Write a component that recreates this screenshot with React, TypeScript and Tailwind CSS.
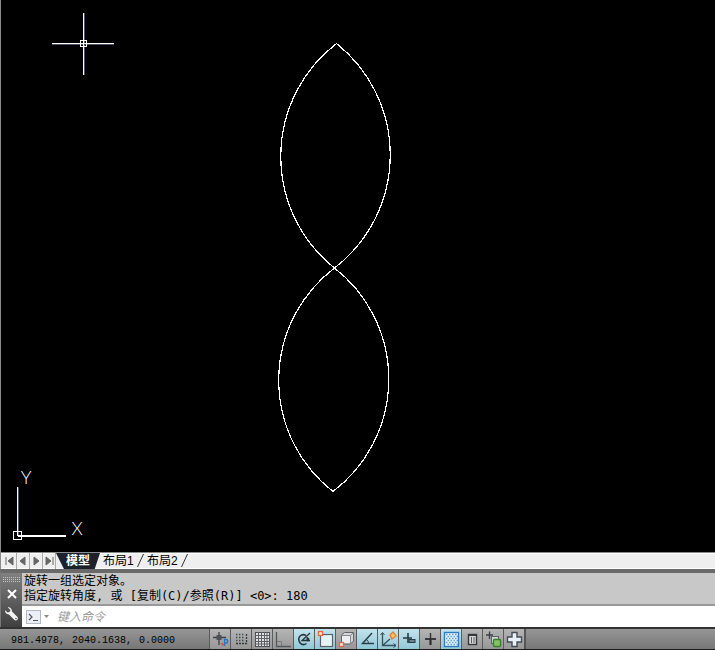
import { ReactNode, useState } from 'react';

const NAV_BUTTONS = [
  { label: 'First layout', path: 'M2 2V10M9 2V10L4 6Z' },
  { label: 'Previous layout', path: 'M8 2V10L3 6Z' },
  { label: 'Next layout', path: 'M4 2V10L9 6Z' },
  { label: 'Last layout', path: 'M10 2V10M3 2V10L8 6Z' },
];

const LAYOUTS = ['布局1', '布局2'];

const HISTORY = ['旋转一组选定对象。', '指定旋转角度, 或 [复制(C)/参照(R)] <0>: 180'];

type Tool = {
  id: string;
  label: string;
  icon: ReactNode;
};

const TOOLS: Tool[] = [
  {
    id: 'infer',
    label: '推断约束',
    icon: (
      <>
        <path d="M8 2V15M2 7.5H15" stroke="#3d4248" strokeWidth="1.3" />
        <rect x="5.5" y="5" width="5" height="5" fill="#4d5258" />
        <path d="M13.5 16V9.500H16Q17.500 11 16 13H13.500" stroke="#2778c0" strokeWidth="1.3" />
        <path d="M10.5 13L12.5 15.500" stroke="#d9502b" strokeWidth="1.6" />
      </>
    ),
  },
  {
    id: 'snap',
    label: '捕捉模式',
    icon: (
      <>
        <path d="M4 4.5H12M4 7.5H12M4 10.5H12" stroke="#44474b" strokeWidth="1.3" strokeDasharray="1.4 1.6" />
        <path d="M4 13.5H15M14.5 4V14" stroke="#33363a" strokeWidth="1.3" strokeDasharray="2 1" />
      </>
    ),
  },
  {
    id: 'grid',
    label: '栅格显示',
    icon: (
      <>
        <rect x="2.5" y="2.5" width="14" height="14" fill="#e4e4e4" stroke="#4a4d51" />
        <path
          d="M5.5 2V17M8.5 2V17M11.5 2V17M14 2V17M2 5.5H17M2 8.5H17M2 11.5H17M2 14H17"
          stroke="#5b5e62"
        />
      </>
    ),
  },
  {
    id: 'ortho',
    label: '正交模式',
    icon: (
      <>
        <path d="M2.5 2V16.5H17" stroke="#55595e" strokeWidth="1.3" />
        <path d="M3 11.5H7.5V16" stroke="#74787d" />
      </>
    ),
  },
  {
    id: 'polar',
    label: '极轴追踪',
    icon: (
      <>
        <path d="M11 5.500Q8 3.500 5 6Q2.500 9 5 13Q8 16 11.500 13.500" stroke="#27333b" strokeWidth="1.5" />
        <path d="M15 3L7 10.500H15" stroke="#27333b" strokeWidth="1.3" />
        <path d="M11.5 6.500L14.500 8.500L13 12L11.500 9.500Z" fill="#27333b" />
      </>
    ),
  },
  {
    id: 'osnap',
    label: '对象捕捉',
    icon: (
      <>
        <rect x="4.5" y="4.5" width="12" height="12" fill="#e5f3f7" stroke="#59636a" strokeWidth="1.2" />
        <rect x="2.5" y="1.5" width="4" height="4" fill="#ffe5d6" stroke="#e8683a" strokeWidth="1.3" />
      </>
    ),
  },
  {
    id: 'osnap3d',
    label: '三维对象捕捉',
    icon: (
      <>
        <path d="M4.5 5L7.5 2.5H16.5V11L13.5 14H4.5Z" fill="#d4d7da" stroke="#62676c" />
        <path d="M4.5 5.5H13.5V14M13.5 5.5L16.5 2.5" stroke="#858a8f" />
        <rect x="5" y="6" width="8" height="7" fill="#eceff1" />
        <rect x="2.5" y="12.5" width="4" height="4" fill="#ffe5d6" stroke="#e8683a" strokeWidth="1.3" />
      </>
    ),
  },
  {
    id: 'otrack',
    label: '对象捕捉追踪',
    icon: (
      <>
        <path d="M14 3L4.5 13.5H16" stroke="#2b4049" strokeWidth="1.5" />
        <path d="M8.5 9.5Q10.5 11 10.5 13.5" stroke="#2b4049" />
      </>
    ),
  },
  {
    id: 'ducs',
    label: '允许动态 UCS',
    icon: (
      <>
        <path d="M3.5 3V15.5H17M3.5 15.5L11 9" stroke="#35515c" strokeWidth="1.3" />
        <path d="M1.5 5L3.5 2.5L5.5 5M14.5 13.5L17 15.5L14.5 17.5" stroke="#35515c" />
        <path d="M11 5L14 2L17 6L13 9Z" fill="#ffc34d" stroke="#e8792e" strokeWidth="1.2" />
      </>
    ),
  },
  {
    id: 'dyn',
    label: '动态输入',
    icon: (
      <>
        <path d="M8 3V13M3 8H12" stroke="#273b44" strokeWidth="1.6" />
        <rect x="9" y="9.5" width="6" height="3" fill="#6f858e" stroke="#273b44" />
      </>
    ),
  },
  {
    id: 'lwt',
    label: '显示/隐藏线宽',
    icon: (
      <>
        <path d="M9.5 3V9" stroke="#2c2e31" strokeWidth="1.4" />
        <path d="M9.5 9V15" stroke="#2c2e31" strokeWidth="2.2" />
        <path d="M4 9H15" stroke="#2c2e31" strokeWidth="1.8" />
      </>
    ),
  },
  {
    id: 'tpy',
    label: '显示/隐藏透明度',
    icon: (
      <>
        <rect x="2.5" y="2.5" width="14" height="14" fill="#edf6fc" stroke="#2f7dc0" strokeWidth="1.4" />
        {[4, 6, 8, 10, 12, 14].map((y) => (
          <path
            key={y}
            d={y % 4 === 0 ? `M4 ${y + 0.5}H16` : `M5.5 ${y + 0.5}H16`}
            stroke="#5a9ed2"
            strokeWidth="1.5"
            strokeDasharray="1.5 1.5"
          />
        ))}
      </>
    ),
  },
  {
    id: 'qp',
    label: '快捷特性',
    icon: (
      <>
        <rect x="5.5" y="4.5" width="8" height="10" fill="#d8d8d8" stroke="#34373a" strokeWidth="1.4" />
        <path d="M6 5.5H13" stroke="#34373a" />
        <path d="M8.5 7V13M11 7V13" stroke="#5b5e61" />
      </>
    ),
  },
  {
    id: 'sc',
    label: '选择循环',
    icon: (
      <>
        <path d="M5.5 1.5V9M2 5H9" stroke="#3b4044" strokeWidth="1.3" />
        <rect x="7.5" y="6.5" width="7" height="7" fill="#cfd3d5" stroke="#5d6367" />
        <rect x="9.5" y="9.5" width="7" height="7" rx="1" fill="#86c163" stroke="#36812a" strokeWidth="1.4" />
      </>
    ),
  },
  {
    id: 'am',
    label: '注释监视器',
    icon: (
      <path
        d="M7 2.5H12V7H16.5V12H12V16.5H7V12H2.5V7H7Z"
        fill="#eaf0f5"
        stroke="#414c57"
        strokeWidth="1.4"
      />
    ),
  },
];

function DrawingArea() {
  return (
    <main className="relative min-h-[552px] flex-1 overflow-hidden border-l border-[#8a8a8a] bg-black">
      <svg className="absolute left-0 top-0" width="400" height="500" viewBox="1 0 400 500" fill="none" stroke="#fff">
        <g shapeRendering="crispEdges">
          <path d="M52 44.5H114M84.500 13V75" stroke="#46536b" />
          <path d="M52 43.5H114M83.500 13V75" />
          <rect x="80.5" y="40.5" width="6" height="6" />
        </g>
        <g strokeWidth="1.2" shapeRendering="crispEdges">
          <path d="M336.5 43.5A142.5 142.5 0 0 0 334.5 268A142.5 142.5 0 0 0 336.5 43.5Z" />
          <path d="M334.5 268A141 141 0 0 0 333 491.5A141 141 0 0 0 334.5 268Z" />
        </g>
      </svg>
      <svg className="absolute bottom-0 left-0" width="100" height="92" viewBox="1 460 100 92" fill="none">
        <g stroke="#fff" shapeRendering="crispEdges">
          <path d="M18.5 487V536" stroke="#46536b" />
          <path d="M17.5 487V536" />
          <path d="M18 536H66" strokeWidth="2" />
          <rect x="13.5" y="531.5" width="8" height="8" />
        </g>
        <g fill="#fff" fontSize="18" textAnchor="middle" className="font-['Lato',sans-serif] font-light">
          <text x="26" y="484">Y</text>
          <text x="77" y="535">X</text>
        </g>
      </svg>
    </main>
  );
}

function LayoutTabs() {
  const [active, setActive] = useState('模型');

  return (
    <nav className="flex h-[17px] items-stretch border-l border-t border-l-[#8a8a8a] border-t-[#8a8a8a] bg-[#efefef] pl-[3px] text-[12px] leading-4 shadow-[inset_0_1px_0_#fff,inset_0_-1px_0_#fff]">
      {NAV_BUTTONS.map((btn) => (
        <button
          key={btn.label}
          type="button"
          aria-label={btn.label}
          className="flex w-[13px] items-center justify-center border-r border-[#aaa]"
        >
          <svg width="12" height="12" viewBox="0 0 12 12" fill="#666" stroke="#666" strokeWidth="1">
            <path d={btn.path} />
          </svg>
        </button>
      ))}
      <button
        type="button"
        onClick={() => setActive('模型')}
        aria-pressed={active === '模型'}
        className="w-11 bg-[#1c222b] text-center font-bold text-white [clip-path:polygon(0_0,100%_0,88%_100%,18%_100%)]"
      >
        模型
      </button>
      {LAYOUTS.map((name) => (
        <button
          key={name}
          type="button"
          onClick={() => setActive(name)}
          aria-pressed={active === name}
          className="flex w-11 justify-between pl-[3px] text-black"
        >
          <span>{name}</span>
          <svg width="8" height="16" viewBox="0 0 8 16" fill="none" stroke="#333">
            <path d="M7.5 1L1.5 14" />
          </svg>
        </button>
      ))}
    </nav>
  );
}

function CommandLine() {
  const [command, setCommand] = useState('');

  return (
    <section className="flex border-l border-t-4 border-l-[#777] border-t-[#6a6a6a]">
      <div className="flex w-[21px] flex-col items-center bg-linear-to-b from-[#808080] to-[#404040] pt-1">
        <svg width="17" height="6" viewBox="0 0 17 6" stroke="#c4c4c4" strokeWidth="1" strokeDasharray="1 1">
          <path d="M0 .5H17M0 2.5H17M0 4.5H17" />
        </svg>
        <button type="button" aria-label="关闭" className="mt-[3px] flex h-4 items-center">
          <svg width="10" height="10" viewBox="0 0 10 10" stroke="#fff" strokeWidth="2">
            <path d="M1 1L9 9M9 1L1 9" />
          </svg>
        </button>
        <button type="button" aria-label="自定义" className="mt-[3px] flex h-4 items-center">
          <svg width="15" height="15" viewBox="0 0 15 15" fill="none">
            <path
              d="M4 1.5L6.5 4L5.5 6L3.5 6.5L1 4Q1 8 5 8.5L10.5 14Q12 15 13.5 13.5Q14.5 12 13.5 11L8 5.5Q8 1.5 4 1Z"
              fill="#f4f4f4"
            />
            <circle cx="12" cy="12.5" r=".8" fill="#555" />
          </svg>
        </button>
      </div>
      <div className="flex min-w-0 flex-1 flex-col">
        <div className="border-b-2 border-[#999] bg-[#c8c8c8] pl-[2px] pt-px font-['DejaVu_Sans_Mono','Noto_Sans_CJK_SC',monospace] text-[12px] leading-[15px] text-black">
          {HISTORY.map((line) => (
            <p key={line} className="whitespace-pre">
              {line}
            </p>
          ))}
        </div>
        <div className="flex h-[21px] items-center bg-white pl-1">
          <button type="button" aria-label="最近使用的命令" className="flex items-center gap-[3px]">
            <svg width="15" height="14" viewBox="0 0 15 14" fill="none">
              <rect x=".5" y=".5" width="14" height="13" fill="#eceff5" stroke="#b4bac4" />
              <path d="M3 4L6 7L3 10M7 10.5H12" stroke="#4c5666" strokeWidth="1.2" />
            </svg>
            <svg width="5" height="3" viewBox="0 0 5 3" fill="#888">
              <path d="M0 0H5L2.5 3Z" />
            </svg>
          </button>
          <input
            type="text"
            aria-label="命令"
            placeholder="键入命令"
            value={command}
            onChange={(e) => setCommand(e.target.value)}
            className="ml-2 min-w-0 flex-1 text-[12px] leading-4 text-black outline-none placeholder:italic placeholder:text-[#999]"
          />
        </div>
      </div>
    </section>
  );
}

function StatusBar() {
  const [enabled, setEnabled] = useState(['polar', 'osnap', 'otrack', 'ducs', 'dyn', 'tpy']);

  const toggle = (id: string) => {
    setEnabled((prev) => (prev.includes(id) ? prev.filter((item) => item !== id) : [...prev, id]));
  };

  return (
    <footer className="flex h-[23px] items-stretch border-b border-t-2 border-b-[#1c1c1c] border-t-[#333] bg-linear-to-b from-[#969696] to-[#777]">
      <div className="flex w-[209px] shrink-0 items-center gap-[7px] pl-[11px] pt-[3px] font-['Liberation_Mono',monospace] text-[10px] leading-4 text-black">
        <span>981.4978,</span>
        <span>2040.1638,</span>
        <span>0.0000</span>
      </div>
      <div className="flex border-r-2 border-[#555]">
        {TOOLS.map((tool) => {
          const on = enabled.includes(tool.id);
          return (
            <button
              key={tool.id}
              type="button"
              aria-label={tool.label}
              aria-pressed={on}
              onClick={() => toggle(tool.id)}
              className={`flex w-[21px] items-center justify-center border-l border-[#5c5c5c] ${
                on ? 'bg-linear-to-b from-[#c3e3ec] to-[#91c8d8]' : 'bg-linear-to-b from-[#b5b5b5] to-[#979797]'
              }`}
            >
              <svg width="19" height="19" viewBox="0 0 19 19" fill="none">
                {tool.icon}
              </svg>
            </button>
          );
        })}
      </div>
    </footer>
  );
}

export default function App() {
  return (
    <div className="flex min-h-screen flex-col bg-black font-['Liberation_Sans','Noto_Sans_CJK_SC',sans-serif]">
      <DrawingArea />
      <LayoutTabs />
      <CommandLine />
      <StatusBar />
    </div>
  );
}
